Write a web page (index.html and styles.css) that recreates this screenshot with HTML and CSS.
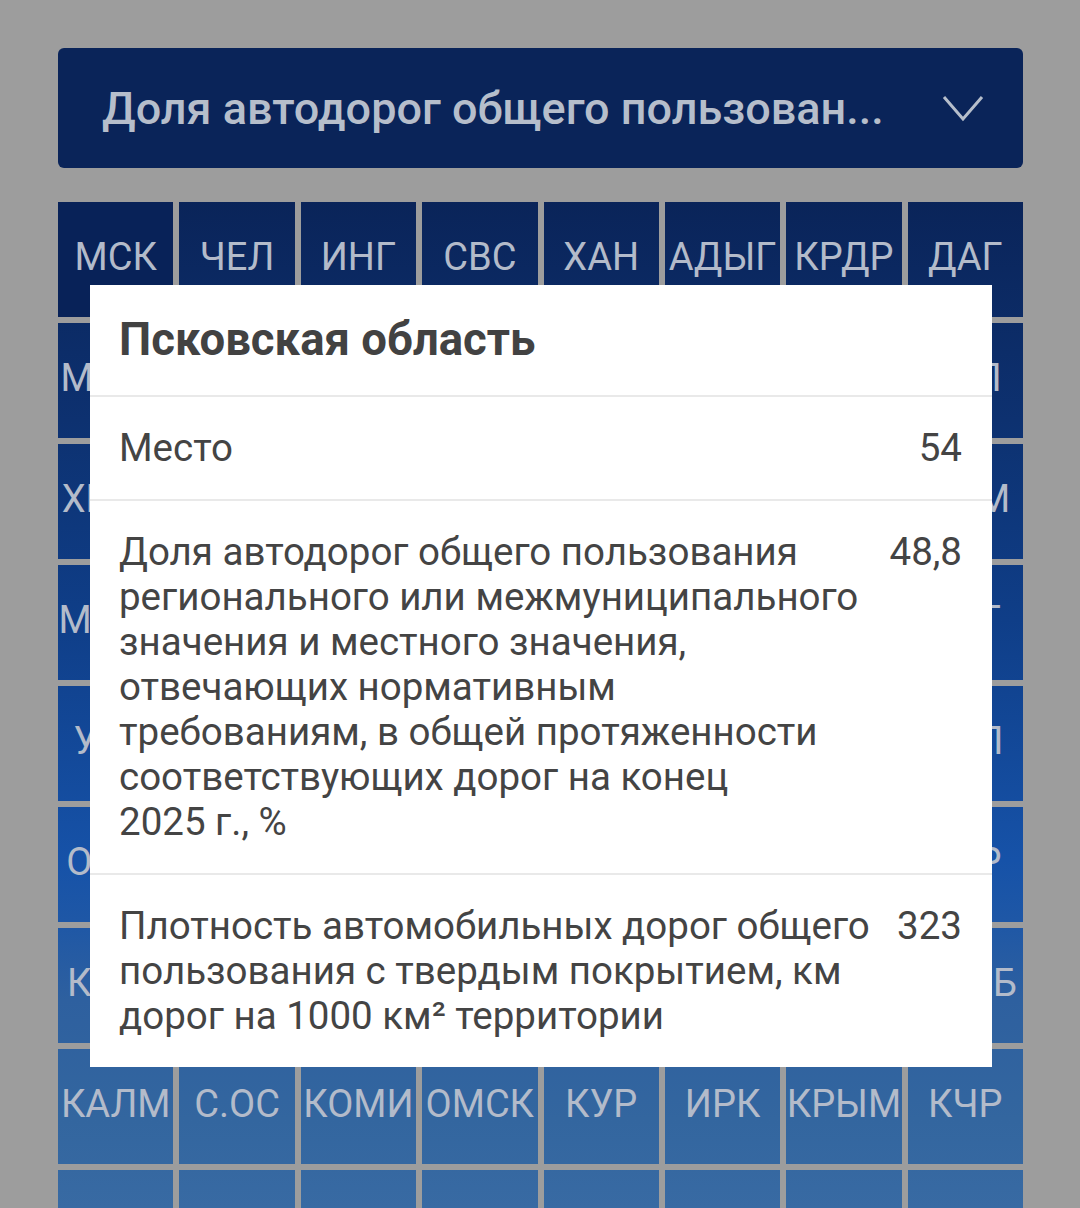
FILE: index.html
```html
<!DOCTYPE html>
<html lang="ru">
<head>
    <meta charset="UTF-8">
    <title>Рейтинг регионов – дороги</title>
    <link rel="stylesheet" href="styles.css">
</head>
<body>
    <div class="page">
        <!-- Indicator picker -->
        <button class="picker" type="button">
            <span class="picker-label">Доля автодорог общего пользован...</span>
            <svg class="picker-arrow" width="44" height="28" viewBox="0 0 44 28">
                <polyline points="3,3 22,25 41,3" fill="none" stroke="currentColor" stroke-width="3"/>
            </svg>
        </button>

        <!-- Region tiles -->
        <div class="tiles">
            <div class="tile">МСК</div>
            <div class="tile">ЧЕЛ</div>
            <div class="tile">ИНГ</div>
            <div class="tile">СВС</div>
            <div class="tile">ХАН</div>
            <div class="tile">АДЫГ</div>
            <div class="tile">КРДР</div>
            <div class="tile">ДАГ</div>

            <div class="tile">МОСО</div>
            <div class="tile">ТАТ</div>
            <div class="tile">БЕЛ</div>
            <div class="tile">ЛЕН</div>
            <div class="tile">ЯМАЛ</div>
            <div class="tile">САХ</div>
            <div class="tile">ВОР</div>
            <div class="tile">ТУЛ</div>

            <div class="tile">ХМАО</div>
            <div class="tile">БАШ</div>
            <div class="tile">ЧУВ</div>
            <div class="tile">РОСТ</div>
            <div class="tile">САМ</div>
            <div class="tile">НИЖ</div>
            <div class="tile">ПЕНЗ</div>
            <div class="tile">ТЮМ</div>

            <div class="tile">МУРМ</div>
            <div class="tile">КАЛУ</div>
            <div class="tile">ЛИП</div>
            <div class="tile">СТАВ</div>
            <div class="tile">ТОМ</div>
            <div class="tile">ЯРС</div>
            <div class="tile">АМУР</div>
            <div class="tile">ВЛГ</div>

            <div class="tile">УДМ</div>
            <div class="tile">КУРГ</div>
            <div class="tile">БРЯН</div>
            <div class="tile">ТВЕР</div>
            <div class="tile">ПСК</div>
            <div class="tile">ВЛАД</div>
            <div class="tile">НОВГ</div>
            <div class="tile">ОРЛ</div>

            <div class="tile">ОРЕН</div>
            <div class="tile">КОСТ</div>
            <div class="tile">ИВАН</div>
            <div class="tile">КИР</div>
            <div class="tile">АРХ</div>
            <div class="tile">ТАМБ</div>
            <div class="tile">ПЕРМ</div>
            <div class="tile">КБР</div>

            <div class="tile">КАЛГ</div>
            <div class="tile">РЯЗ</div>
            <div class="tile">СМОЛ</div>
            <div class="tile">ВОЛГ</div>
            <div class="tile">НОВС</div>
            <div class="tile">САР</div>
            <div class="tile">МОРД</div>
            <div class="tile">КЕМБ</div>

            <div class="tile">КАЛМ</div>
            <div class="tile">С.ОС</div>
            <div class="tile">КОМИ</div>
            <div class="tile">ОМСК</div>
            <div class="tile">КУР</div>
            <div class="tile">ИРК</div>
            <div class="tile">КРЫМ</div>
            <div class="tile">КЧР</div>

            <div class="tile">ТЫВА</div>
            <div class="tile">ЕАО</div>
            <div class="tile">ЗАБ</div>
            <div class="tile">БУР</div>
            <div class="tile">АЛТ</div>
            <div class="tile">ХАК</div>
            <div class="tile">ЧУК</div>
            <div class="tile">МАГ</div>
        </div>
    </div>

    <!-- Region details dialog -->
    <div class="dialog">
        <h2 class="dialog-title">Псковская область</h2>
        <div class="dialog-row">
            <div class="dialog-label">Место</div>
            <div class="dialog-value">54</div>
        </div>
        <div class="dialog-row">
            <div class="dialog-label">Доля автодорог общего пользования регионального или межмуниципального значения и местного значения, отвечающих нормативным требованиям, в общей протяженности соответствующих дорог на конец 2025&nbsp;г.,&nbsp;%</div>
            <div class="dialog-value">48,8</div>
        </div>
        <div class="dialog-row">
            <div class="dialog-label">Плотность автомобильных дорог общего пользования с твердым покрытием, км дорог на 1000&nbsp;км² территории</div>
            <div class="dialog-value">323</div>
        </div>
    </div>
</body>
</html>
```

FILE: styles.css
```css
body {
    margin: 0;
    background: #9d9d9d;
    font-family: Roboto, 'Liberation Sans', Arial, sans-serif;
    height: 1208px;
    overflow: hidden;
}
.page {
    padding: 48px 57px 0 58px;
}
.picker {
    display: flex;
    align-items: center;
    justify-content: space-between;
    width: 100%;
    height: 120px;
    padding: 0 38px 0 44px;
    border: none;
    border-radius: 6px;
    background: #0a2459;
    color: #b6becb;
    font-family: inherit;
    font-size: 45px;
    font-weight: 500;
    box-sizing: border-box;
    cursor: pointer;
}
.picker-arrow {
    color: #b6becb;
}
.tiles {
    display: grid;
    grid-template-columns: repeat(8, 1fr);
    grid-auto-rows: 115px;
    gap: 6px;
    margin-top: 34px;
}
.tile {
    display: flex;
    align-items: center;
    justify-content: center;
    padding-bottom: 6px;
    overflow: hidden;
    white-space: nowrap;
    color: #b3bbca;
    font-size: 38px;
    background: linear-gradient(180deg, #0a2459 200px, #0d3170 420px, #0f3e88 620px, #1652a8 860px, #1e57a6 920px, #2e609f 1000px, #33669f 1120px, #386aa3 1208px);
    background-attachment: fixed;
}
.tile:first-child {
    background: #082258;
}
.dialog {
    position: absolute;
    left: 90px;
    top: 285px;
    width: 902px;
    background: #fff;
    color: #444;
}
.dialog-title {
    margin: 0;
    padding: 28px 30px 29px 29px;
    font-size: 45.5px;
    line-height: 53px;
    font-weight: bold;
    color: #424242;
}
.dialog-row {
    display: flex;
    gap: 22px;
    padding: 28px 30px 29px 29px;
    border-top: 2px solid #e9e9e9;
    font-size: 38.5px;
    line-height: 45px;
}
.dialog-label {
    flex: 1;
}
.dialog-value {
    text-align: right;
}
```
